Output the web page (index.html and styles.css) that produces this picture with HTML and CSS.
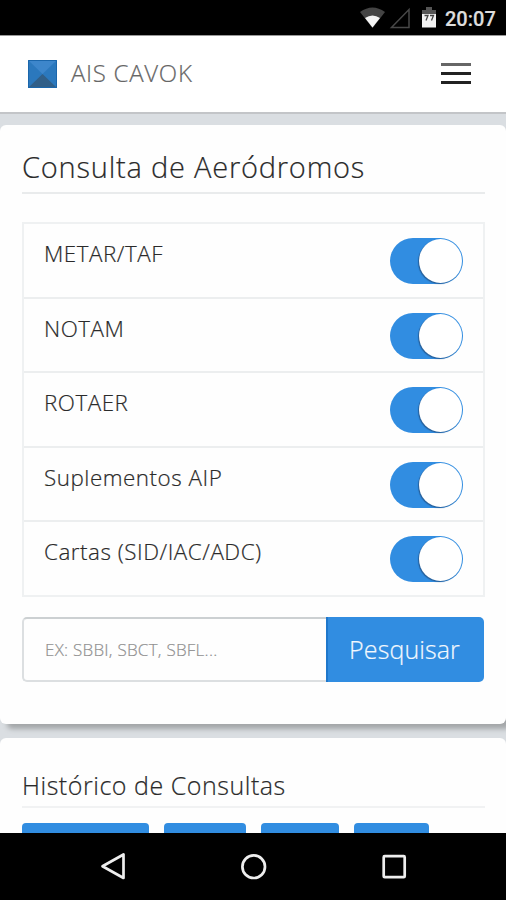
FILE: index.html
```html
<!DOCTYPE html>
<html lang="pt-BR">
<head>
<meta charset="utf-8">
<title>AIS CAVOK</title>
<link rel="stylesheet" href="styles.css">
</head>
<body>
<div class="status">
  <svg class="status-icons" width="80" height="24" viewBox="0 0 80 24">
    <path d="M0 5Q12.500-4 25 5L12.500 21Z" fill="#444"/>
    <path d="M5 11Q12.500 6 20 11L12.500 20.500Z" fill="#f4f4f4"/>
    <path d="M31.500 20.500H49V2.500Z" fill="none" stroke="#484848" stroke-width="1.500"/>
    <path d="M66 0h6v3h4v5H62V3h4Z" fill="#555"/>
    <path d="M62 7h14v13.500H62Z" fill="#f2f2f2"/>
    <path d="M64.500 8.500h3.500l-2 5M70 8.500h3.500l-2 5" fill="none" stroke="#444" stroke-width="1.300"/>
  </svg>
  <span class="clock">20:07</span>
</div>
<header class="header">
  <svg class="logo" width="29" height="28" viewBox="0 0 29 28">
    <path d="M0 0H29V28H0Z" fill="#2b78bd"/>
    <path d="M0 0H29L14.500 14Z" fill="#3d86cb"/>
    <path d="M0 28L14.500 14L29 28Z" fill="#315f88"/>
    <path d="M.5 .5H28.500V27.500H.5Z" fill="none" stroke="#1b66ab"/>
  </svg>
  <span class="brand">AIS CAVOK</span>
  <div class="menu"><i></i><i></i><i></i></div>
</header>
<main class="content">
  <section class="card search-card">
    <h1 class="title">Consulta de Aeródromos</h1>
    <ul class="options">
      <li><span>METAR/TAF</span><b class="toggle"></b></li>
      <li><span>NOTAM</span><b class="toggle"></b></li>
      <li><span>ROTAER</span><b class="toggle"></b></li>
      <li><span>Suplementos AIP</span><b class="toggle"></b></li>
      <li><span>Cartas (SID/IAC/ADC)</span><b class="toggle"></b></li>
    </ul>
    <div class="search">
      <div class="field"><span>EX: SBBI, SBCT, SBFL...</span></div>
      <div class="button"><span>Pesquisar</span></div>
    </div>
  </section>
  <section class="card history-card">
    <h2 class="subtitle">Histórico de Consultas</h2>
    <div class="chips"><i class="c1"></i><i class="c2"></i><i class="c3"></i><i class="c4"></i></div>
  </section>
</main>
<nav class="nav">
  <svg width="506" height="67" viewBox="0 0 506 67" fill="none" stroke="#eee" stroke-width="2.700">
    <path d="M123.500 21.500V45L102.500 33.300Z" stroke-linejoin="round"/>
    <circle cx="253.700" cy="33.700" r="11.300"/>
    <rect x="383.700" y="23.200" width="21" height="21" rx="1"/>
  </svg>
</nav>
</body>
</html>
```
FILE: styles.css
```css
* { box-sizing: border-box; }
body {
  margin: 0;
  width: 506px;
  height: 900px;
  overflow: hidden;
  display: flex;
  flex-direction: column;
  background: #dadee2;
  font-family: "Open Sans", "Noto Sans", sans-serif;
  font-weight: 300;
  color: #2a2a2a;
  -webkit-text-stroke: 0.2px;
}
.status {
  height: 35px;
  flex: none;
  background: #000;
  display: flex;
  justify-content: flex-end;
  padding: 7px 11px 0 0;
  gap: 5px;
}
.clock {
  font: 500 20px/24px Roboto, sans-serif;
  color: #ddd;
  width: 50px;
  white-space: nowrap;
}
.header {
  height: 79px;
  flex: none;
  display: flex;
  align-items: center;
  padding: 0 35px 1px 28px;
  background: #fff;
  border-top: 1px solid #999;
  border-bottom: 2px solid #c3c5c8;
}
.brand {
  margin: -2px 0 0 14px;
  font-size: 24px;
  line-height: 32px;
  letter-spacing: 0.7px;
  color: #666;
}
.menu {
  margin-left: auto;
  width: 30px;
  display: flex;
  flex-direction: column;
  gap: 6px;
}
.menu i { height: 3px; background: #222; }
.menu i:first-child { background: #666; }
.content {
  flex: 1;
  min-height: 0;
  overflow: hidden;
  padding-top: 11px;
  display: flex;
  flex-direction: column;
  gap: 14px;
}
.card { flex: none; background: #fefefe; border-radius: 6px; padding: 0 21px 0 22px; }
.search-card { height: 599px; box-shadow: 6px 6px 5px -1px #a4a7a9; }
.title {
  margin: 0;
  height: 69px;
  padding-top: 22px;
  border-bottom: 2px solid #e9ebec;
  font-size: 29px;
  line-height: 40px;
  letter-spacing: 0.78px;
  font-weight: 300;
  white-space: nowrap;
}
.options {
  list-style: none;
  margin: 28px 0 0;
  padding: 0;
  border: 2px solid #eff1f2;
  height: 375px;
}
.options li {
  height: 74.5px;
  display: flex;
  justify-content: space-between;
  padding: 14px 20px 0;
  border-bottom: 2px solid #eceeef;
}
.options li:last-child { border-bottom: 0; }
.options span {
  font-size: 22.4px;
  line-height: 32px;
  letter-spacing: 0.52px;
  white-space: nowrap;
}
.toggle {
  width: 73px;
  height: 46px;
  border-radius: 23px;
  background: #318de1;
  display: flex;
  justify-content: flex-end;
  padding: 1px;
}
.toggle::after {
  content: "";
  width: 43px;
  height: 44px;
  border-radius: 50%;
  background: #fff;
  box-shadow: -1px 1px 1px #265f9a;
}
.search { display: flex; height: 65px; margin-top: 20px; }
.field {
  width: 304px;
  border: 2px solid #dcdfe1;
  border-top-color: #ccd0d2;
  border-right: 0;
  border-radius: 5px 0 0 5px;
  padding-left: 21px;
  font-size: 17px;
  line-height: 61px;
  letter-spacing: 0.25px;
  color: #909090;
  white-space: nowrap;
}
.button {
  width: 158px;
  border-radius: 0 5px 5px 0;
  background: #318de1;
  border-left: 2px solid #1f77cb;
  padding-right: 3px;
  color: #f2f8fe;
  font-size: 25px;
  line-height: 64px;
  letter-spacing: 0.1px;
  text-align: center;
}
.history-card { height: 200px; }
.subtitle {
  margin: 0;
  height: 70px;
  padding-top: 28px;
  border-bottom: 2px solid #f1f2f3;
  font-size: 25px;
  line-height: 38px;
  letter-spacing: 0.53px;
  font-weight: 300;
  white-space: nowrap;
}
.chips { display: flex; gap: 15px; margin-top: 15px; }
.chips i { height: 40px; border-radius: 4px; background: #318de1; }
.c1 { width: 127px; }
.c2 { width: 82px; }
.c3 { width: 78px; }
.c4 { width: 75px; }
.nav { flex: none; height: 67px; background: #000; }
.nav svg { display: block; }
```
